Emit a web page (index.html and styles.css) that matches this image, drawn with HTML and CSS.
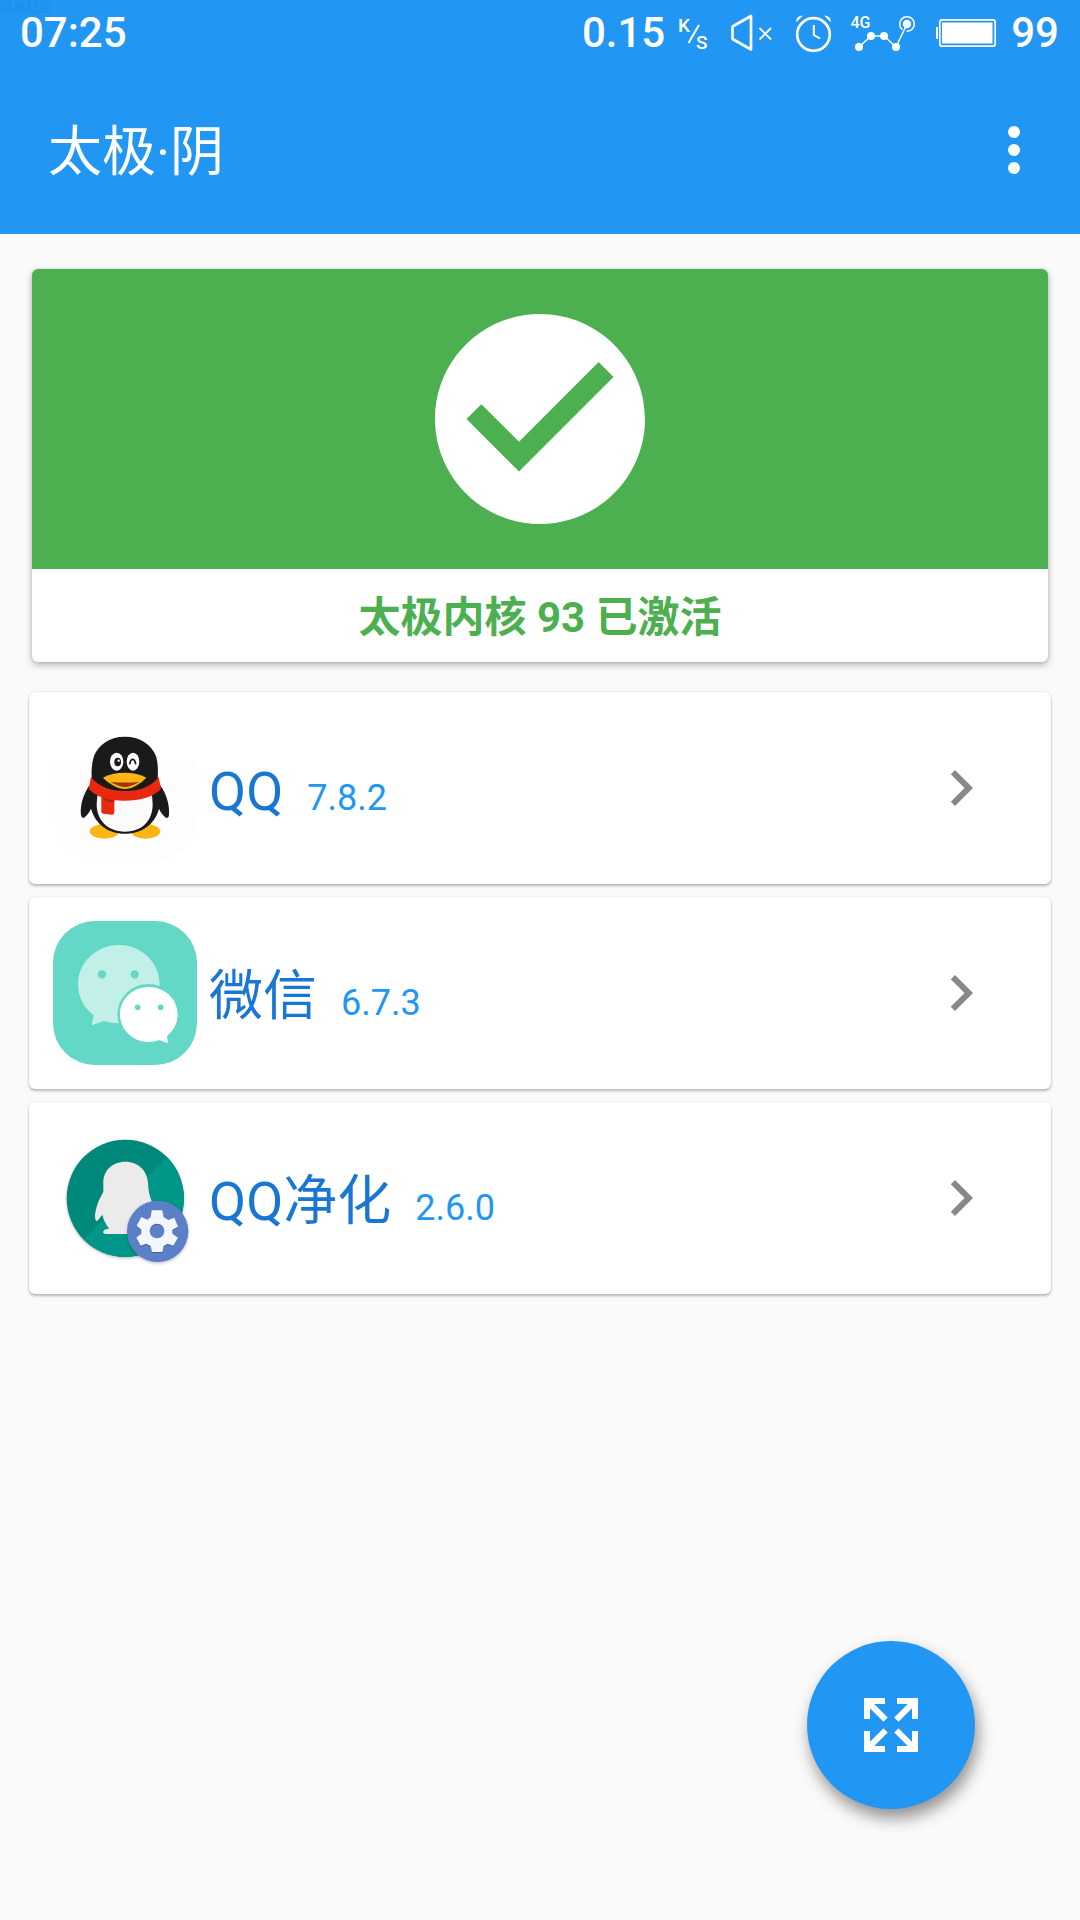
FILE: index.html
```html
<!DOCTYPE html>
<html lang="zh-CN">
<head>
    <meta charset="UTF-8">
    <meta name="viewport" content="width=device-width, initial-scale=1.0">
    <title>太极·阴</title>
    <link rel="stylesheet" href="styles.css">
</head>
<body>
    <header class="header">
        <div class="status-bar">
            <span class="watermark">绮星社区</span>
            <span class="clock">07:25</span>
            <div class="status-icons">
                <span class="speed">0.15</span>
                <svg class="icon-unit" width="32" height="66" viewBox="678 0 32 66">
                    <text x="679" y="31.500" font-size="19">K</text>
                    <text x="697" y="48.500" font-size="19">S</text>
                    <path d="M689.500 43L700 25" stroke="#fff" stroke-width="2"/>
                </svg>
                <svg class="icon-mute" width="44" height="66" viewBox="730 0 44 66" fill="none" stroke="#fff">
                    <path d="M733.500 26.500L752 16V49.500L733.500 39z" stroke-width="2.700" stroke-linejoin="round"/>
                    <path d="M760.500 28L772 39.500M772 28L760.500 39.500" stroke-width="1.800"/>
                </svg>
                <svg class="icon-alarm" width="38" height="66" viewBox="796 0 38 66" fill="none" stroke="#fff">
                    <circle cx="814.500" cy="34.500" r="16.300" stroke-width="2.700"/>
                    <path d="M814.800 25V35L821 38.500" stroke-width="2"/>
                    <path d="M797 22.500Q797 15.500 804 15.500zM832 22.500Q832 15.500 825 15.500z" fill="#fff" stroke="none"/>
                </svg>
                <svg class="icon-signal" width="66" height="66" viewBox="850 0 66 66" fill="#fff">
                    <text x="851.500" y="28" font-size="16">4G</text>
                    <path d="M860 47L872 36H885L897 47L908 24" fill="none" stroke="#fff" stroke-width="1.500"/>
                    <circle cx="860" cy="47" r="4"/>
                    <circle cx="872" cy="36" r="4"/>
                    <circle cx="885" cy="36" r="4"/>
                    <circle cx="897" cy="47" r="4"/>
                    <circle cx="908" cy="24" r="4.200"/>
                    <circle cx="908" cy="24" r="7.300" fill="none" stroke="#fff" stroke-width="1.500" stroke-dasharray="40.900 5" transform="rotate(130 908 24)"/>
                </svg>
                <svg class="icon-battery" width="62" height="66" viewBox="936 0 62 66" fill="#fff">
                    <rect x="937" y="27" width="2" height="12"/>
                    <rect x="940.800" y="19.800" width="55.400" height="26.400" rx="2.500" fill="none" stroke="#fff" stroke-width="1.700"/>
                    <rect x="943" y="22.500" width="50.500" height="21"/>
                </svg>
                <span class="battery-level">99</span>
            </div>
        </div>
        <div class="toolbar">
            <h1 class="title">太极·阴</h1>
            <svg class="menu" width="72" height="72" viewBox="0 0 24 24" fill="#fff">
                <circle cx="12" cy="6" r="2"/>
                <circle cx="12" cy="12" r="2"/>
                <circle cx="12" cy="18" r="2"/>
            </svg>
        </div>
    </header>

    <main class="content">
        <section class="status-card">
            <div class="status-banner">
                <svg width="252" height="252" viewBox="0 0 24 24" fill="#fff">
                    <path d="M12 2C6.480 2 2 6.480 2 12s4.480 10 10 10 10-4.480 10-10S17.520 2 12 2zm-2 15l-5-5 1.410-1.410L10 14.170l7.590-7.590L19 8l-9 9z"/>
                </svg>
            </div>
            <p class="status-text">太极内核 93 已激活</p>
        </section>

        <div class="app-list">
            <a class="app-item" href="#">
                <svg class="app-icon" viewBox="39 48 432 432">
                    <path d="M45 182H465V350Q465 478 330 478H180Q45 478 45 350z" fill="#fdfdfd"/>
                    <ellipse cx="193" cy="394" rx="44" ry="22" fill="#fcb514"/>
                    <ellipse cx="317" cy="394" rx="44" ry="22" fill="#fcb514"/>
                    <path d="M149 255C128 285 120 318 123 345Q125 356 132 353C141 346 148 337 153 326C166 372 204 401 255 401S345 372 357 326C362 337 369 346 378 353Q386 356 387 345C389 318 382 285 360 255z" fill="#1a1a1a"/>
                    <path d="M176 275Q170 290 170 313C170 361 203 395 255 395S338 361 338 313Q338 290 333 275z" fill="#fbfbfb"/>
                    <path d="M156 245C153 215 155 190 162 168C177 132 210 110 255 110S333 132 348 168C355 190 354 215 353 245C335 271 300 275 255 275S177 271 156 245z" fill="#1a1a1a"/>
                    <path d="M184 284L223 295V337Q223 344 215 344L191 341Q183 340 184 332z" fill="#e8290f"/>
                    <path d="M186 292L223 300V306Q203 310 188 293z" fill="#b91f12"/>
                    <path d="M153 231C177 261 212 273 255 273S333 261 356 231L363 267C337 293 300 302 253 302S173 293 146 267z" fill="#e8290f"/>
                    <ellipse cx="230" cy="185" rx="20" ry="27" fill="#fff"/>
                    <ellipse cx="279" cy="185" rx="19" ry="27" fill="#fff"/>
                    <ellipse cx="233" cy="186" rx="10" ry="13" fill="#1a1a1a"/>
                    <circle cx="236" cy="182" r="3.500" fill="#fff"/>
                    <path d="M269 193Q271 178 278 178T287 193" fill="none" stroke="#1a1a1a" stroke-width="5"/>
                    <path d="M189 233Q215 218 254 218T319 233C301 252 276 267 255 267S207 252 189 233z" fill="#fcb514"/>
                    <path d="M211 246Q255 249 298 246Q270 261 255 261T211 246z" fill="#a5300f"/>
                </svg>
                <span class="app-name">QQ</span>
                <span class="app-version">7.8.2</span>
                <svg class="chevron" viewBox="0 0 24 24"><path d="M10 6L8.590 7.410 13.170 12l-4.580 4.590L10 18l6-6z"/></svg>
            </a>
            <a class="app-item" href="#">
                <svg class="app-icon" viewBox="39 48 432 432">
                    <rect x="39" y="48" width="432" height="432" rx="125" fill="#64d8c6"/>
                    <path d="M237 120C304 120 359 172 359 238S304 355 237 355Q213 355 193 348L155 361L161 331C132 309 114 277 114 238C114 172 169 120 237 120z" fill="#c2efe8"/>
                    <circle cx="186" cy="208" r="12.500" fill="#64d8c6"/>
                    <circle cx="284" cy="208" r="12.500" fill="#64d8c6"/>
                    <ellipse cx="326" cy="328" rx="94" ry="91" fill="#64d8c6"/>
                    <path d="M326 246C375 246 413 283 413 328Q413 366 381 393L384 415L358 405Q343 411 326 411C278 411 240 374 240 328S278 246 326 246z" fill="#fff"/>
                    <circle cx="293" cy="307" r="8.500" fill="#64d8c6"/>
                    <circle cx="362" cy="307" r="8.500" fill="#64d8c6"/>
                </svg>
                <span class="app-name">微信</span>
                <span class="app-version">6.7.3</span>
                <svg class="chevron" viewBox="0 0 24 24"><path d="M10 6L8.590 7.410 13.170 12l-4.580 4.590L10 18l6-6z"/></svg>
            </a>
            <a class="app-item" href="#">
                <svg class="app-icon" viewBox="39 48 432 432">
                    <circle class="badge-shadow" cx="256" cy="265" r="176" fill="#00897b"/>
                    <path d="M380 140A176 176 0 0 1 131 389z" fill="#009688"/>
                    <path d="M256 155C217 155 190 181 190 218V245C176 270 165 297 165 321Q166 334 172 333L187 314Q192 337 208 356Q190 357 189 367Q190 372 198 372H300L336 275Q325 253 324 218C322 181 294 155 256 155z" fill="#ebebeb"/>
                    <circle class="badge-shadow" cx="353" cy="364" r="92" fill="#5c80c8"/>
                    <path class="gear-shadow" d="M335 301H367L371 322L385 330L403 323L414 350L397 359V371L414 383L400 407L383 401L371 408L367 426H336L332 408L319 401L302 407L289 383L304 371V359L290 347L304 321L322 329L332 322zM351 341A22 22 0 1 0 351 385A22 22 0 1 0 351 341z" fill="#f3f6fd" fill-rule="evenodd"/>
                </svg>
                <span class="app-name">QQ净化</span>
                <span class="app-version">2.6.0</span>
                <svg class="chevron" viewBox="0 0 24 24"><path d="M10 6L8.590 7.410 13.170 12l-4.580 4.590L10 18l6-6z"/></svg>
            </a>
        </div>
    </main>

    <button class="fab" aria-label="展开">
        <svg width="72" height="72" viewBox="0 0 24 24" fill="#fff">
            <path d="M9.500 13.090L10.910 14.500L6.410 19H10V21H3V14H5V17.590L9.500 13.090M10.910 9.500L9.500 10.910L5 6.410V10H3V3H10V5H6.410L10.910 9.500M14.500 13.090L19 17.590V14H21V21H14V19H17.590L13.090 14.500L14.500 13.090M13.090 9.500L17.590 5H14V3H21V10H19V6.410L14.500 10.910L13.090 9.500Z"/>
        </svg>
    </button>
</body>
</html>
```
FILE: styles.css
```css
* {
    margin: 0;
    padding: 0;
    box-sizing: border-box;
}

:root {
    --primary-color: #2196f3;
    --primary-dark: #1976d2;
    --success-color: #4caf50;
    --background-color: #fafafa;
}

body {
    min-height: 100vh;
    background-color: var(--background-color);
    font-family: Roboto, 'Noto Sans CJK SC', sans-serif;
    overflow: hidden;
}

.header {
    height: 234px;
    background-color: var(--primary-color);
    color: #fff;
}

.status-bar {
    position: relative;
    display: flex;
    justify-content: space-between;
    align-items: center;
    height: 66px;
    padding: 0 21px 0 20px;
    font-size: 42px;
    font-weight: 500;
    line-height: 34px;
}

.watermark {
    position: absolute;
    top: -1px;
    left: 0;
    font-size: 13px;
    line-height: 15px;
    color: rgba(20, 110, 190, 0.16);
}

.status-icons {
    display: flex;
    align-items: center;
}

.status-icons svg {
    flex: none;
}

.status-icons text {
    fill: #fff;
    font-weight: 500;
}

.icon-unit {
    margin-left: 12px;
}

.icon-mute {
    margin-left: 20px;
}

.icon-alarm {
    margin-left: 22px;
}

.icon-signal {
    margin-left: 16px;
}

.icon-battery {
    margin-left: 20px;
}

.battery-level {
    margin-left: 14px;
}

.toolbar {
    display: flex;
    justify-content: space-between;
    align-items: center;
    height: 168px;
    padding: 0 30px 0 48px;
}

.title {
    padding-top: 6px;
    font-size: 54px;
    font-weight: 400;
    line-height: 72px;
}

.content {
    padding: 35px 29px 0;
}

.status-card {
    margin: 0 3px 30px;
    border-radius: 6px;
    background-color: #fff;
    overflow: hidden;
    box-shadow: 0 3px 7px rgba(0, 0, 0, 0.28), 0 0 3px rgba(0, 0, 0, 0.12);
}

.status-banner {
    display: flex;
    justify-content: center;
    align-items: center;
    height: 300px;
    background-color: var(--success-color);
}

.status-text {
    height: 93px;
    line-height: 97px;
    text-align: center;
    font-size: 42px;
    font-weight: 700;
    color: var(--success-color);
}

.app-list {
    display: flex;
    flex-direction: column;
    gap: 13px;
}

.app-item {
    display: flex;
    align-items: center;
    height: 192px;
    padding: 0 54px 0 24px;
    border-radius: 6px;
    background-color: #fff;
    text-decoration: none;
    line-height: 72px;
    box-shadow: 0 2px 3px rgba(0, 0, 0, 0.26), 0 0 2px rgba(0, 0, 0, 0.12);
}

.app-icon {
    width: 144px;
    height: 144px;
    margin-right: 12px;
}

.app-name {
    padding-top: 7px;
    font-size: 54px;
    color: var(--primary-dark);
}

.app-version {
    margin-left: 24px;
    padding-top: 19px;
    font-size: 36px;
    color: var(--primary-color);
}

.chevron {
    width: 72px;
    height: 72px;
    margin-left: auto;
    fill: #888;
}

.badge-shadow {
    filter: drop-shadow(0 4px 4px rgba(0, 0, 0, 0.25));
}

.gear-shadow {
    filter: drop-shadow(0 3px 2px rgba(0, 0, 0, 0.25));
}

.fab {
    position: fixed;
    right: 105px;
    bottom: 111px;
    display: flex;
    justify-content: center;
    align-items: center;
    width: 168px;
    height: 168px;
    border: none;
    border-radius: 50%;
    background-color: var(--primary-color);
    box-shadow: 3px 9px 16px rgba(0, 0, 0, 0.42);
    cursor: pointer;
}
```
